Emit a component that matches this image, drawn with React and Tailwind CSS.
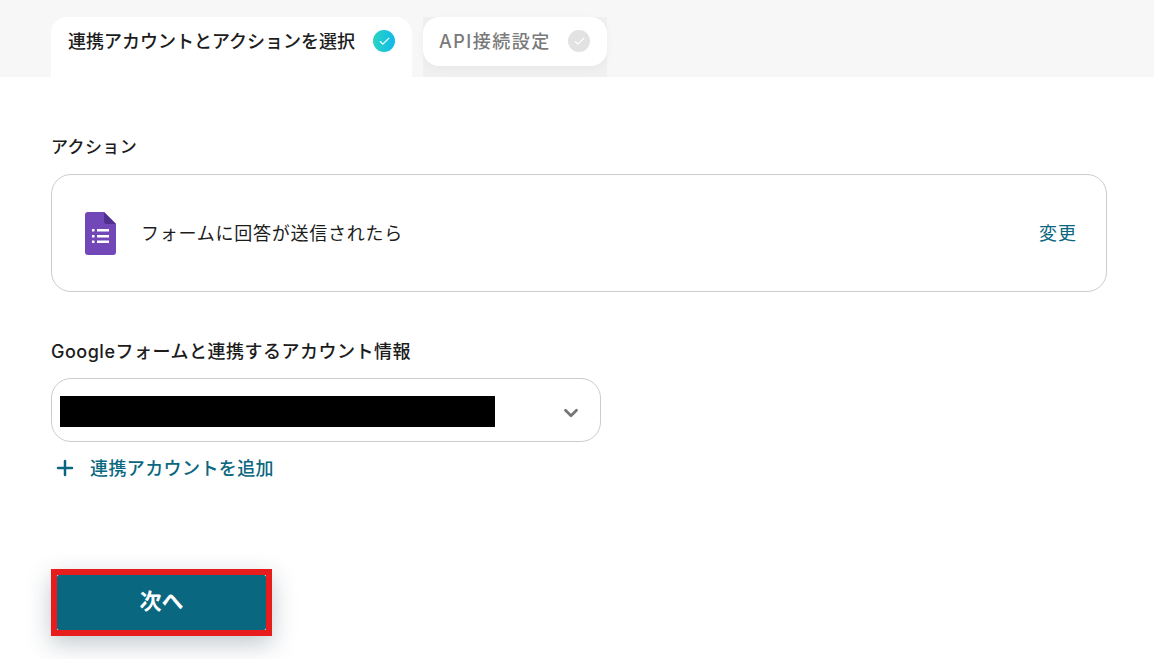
import React from 'react';
import { Check, ChevronDown, Plus } from 'lucide-react';

const font = "font-['Inter','Noto_Sans_CJK_JP','Noto_Sans',sans-serif]";

const FormsIcon = () => (
  <svg width="31" height="43" viewBox="0 0 31 43">
    <path d="M3 0H19L31 12V40a3 3 0 0 1-3 3H3a3 3 0 0 1-3-3V3a3 3 0 0 1 3-3z" fill="#7248b9" />
    <path d="M19 0L31 12H22a3 3 0 0 1-3-3z" fill="#4f2f8f" />
    <rect x="7" y="17" width="2.5" height="2.5" fill="#fff" />
    <rect x="7" y="23" width="2.5" height="2.5" fill="#fff" />
    <rect x="7" y="28.5" width="2.5" height="2.5" fill="#fff" />
    <rect x="12" y="17" width="12" height="2.5" fill="#fff" />
    <rect x="12" y="23" width="12" height="2.5" fill="#fff" />
    <rect x="12" y="28.5" width="12" height="2.5" fill="#fff" />
  </svg>
);

const App = () => {
  return (
    <div className={`${font} w-[1154px] h-[659px] bg-white overflow-hidden text-[#1c1c1c]`}>
      {/* タブ */}
      <div className="h-[77px] bg-[#f7f7f7] pl-[51px] pt-[17px] flex items-start">
        <div className="w-[361px] h-[60px] bg-white rounded-t-2xl pl-[17px] pr-[17px] pt-[9px] flex items-start justify-between">
          <span className="text-[18px] leading-[32px] font-medium">連携アカウントとアクションを選択</span>
          <span className="w-[22px] h-[22px] mt-[4px] rounded-full bg-gradient-to-r from-[#2bd4c0] to-[#12b9ea] flex items-center justify-center">
            <Check size={13} color="#fff" strokeWidth={2} />
          </span>
        </div>
        <div className="ml-[11px] w-[184px] h-[60px] bg-[#f0f0f0]">
          <div className="h-[49px] bg-white rounded-2xl pl-[16px] pr-[17px] pt-[9px] flex items-start justify-between shadow-[0_2px_8px_rgba(0,0,0,0.04)]">
            <span className="text-[18px] tracking-[1.5px] leading-[32px] font-medium text-[#7a7a7a]">API接続設定</span>
            <span className="w-[22px] h-[22px] mt-[4px] rounded-full bg-[#e2e2e2] flex items-center justify-center">
              <Check size={13} color="#fff" strokeWidth={2} />
            </span>
          </div>
        </div>
      </div>

      <div className="pl-[51px] w-[1107px]">
        <div className="mt-[57px] text-[17px] tracking-[0.4px] leading-[26px] font-medium">アクション</div>
        <div className="mt-[14px] h-[118px] border border-[#cccccc] rounded-[20px] flex items-center pl-[33px] pr-[29px]">
          <FormsIcon />
          <span className="ml-[25px] mt-[2px] text-[18px] tracking-[0.75px] leading-[28px] flex-1">フォームに回答が送信されたら</span>
          <span className="mt-[2px] text-[18px] tracking-[1px] leading-[28px] text-[#0a6780]">変更</span>
        </div>

        <div className="mt-[47px] text-[18px] tracking-[0.5px] leading-[26px] font-medium">Googleフォームと連携するアカウント情報</div>
        <div className="mt-[13px] w-[550px] h-[64px] border border-[#cccccc] rounded-[20px] flex items-center pl-[8px] pr-[18px] justify-between">
          <div className="w-[435px] h-[31px] mt-[3px] bg-black" />
          <ChevronDown size={22} color="#757575" strokeWidth={3} className="mt-[6px]" />
        </div>
        <div className="mt-[11px] flex items-center text-[#0a6780]">
          <Plus size={24} strokeWidth={2.5} className="ml-[2px]" />
          <span className="ml-[13px] mt-[2px] text-[18px] tracking-[0.4px] leading-[28px] font-medium">連携アカウントを追加</span>
        </div>

        <div className="mt-[86px] w-[221px] h-[67px] border-[6px] border-[#e71c1c] shadow-[0_8px_24px_rgba(10,40,60,0.25)]">
          <button className="w-full h-full rounded-[2px] bg-[#0a6780] text-white text-[22px] leading-[30px] pb-[3px] font-bold flex items-center justify-center">
            次へ
          </button>
        </div>
      </div>
    </div>
  );
};

export default App;
